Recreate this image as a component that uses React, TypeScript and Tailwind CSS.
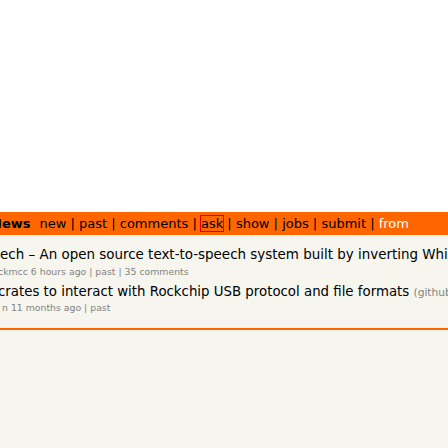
const font = { fontFamily: '"DejaVu Sans", Verdana, sans-serif' };

const navLinks = ["new", "past", "comments", "ask", "show", "jobs", "submit"];

export default function App() {
  return (
    <div className="w-[448px] h-[448px] overflow-hidden bg-white" style={font}>
      <div className="h-[212px]" />
      <div className="bg-[#f6f6ef] h-[236px]">
        {/* top bar */}
        <div className="h-[23px] bg-[#ff6600] flex items-center whitespace-nowrap text-[13px] text-black">
          <b className="ml-[-9px]">News</b>
          <span className="ml-[9px]">
            {navLinks.map((l, i) => (
              <span key={l}>
                {i > 0 && <span> | </span>}
                <span className={l === "ask" ? "outline outline-1 outline-[#e00000]" : ""}>{l}</span>
              </span>
            ))}
            <span> | </span>
            <span className="text-white">from</span>
          </span>
        </div>

        {/* stories */}
        <div className="pt-[12px] whitespace-nowrap">
          <div className="text-[13.45px] text-black leading-[16px]">
            ech – An open source text-to-speech system built by inverting Whisper
          </div>
          <div className="text-[9.33px] text-[#828282] leading-[14px] mt-[2px] ml-[-2px]">
            ckmcc 6 hours ago | past | 35 comments
          </div>
          <div className="text-[13.33px] text-black leading-[16px] mt-[5px] ml-[-2px]">
            crates to interact with Rockchip USB protocol and file formats{" "}
            <span className="text-[10.67px] text-[#828282]">(github.com/rockchip)</span>
          </div>
          <div className="text-[9.33px] text-[#828282] leading-[14px] ml-[2px]">
            n 11 months ago | past
          </div>
        </div>
        <div className="mt-[13px] h-[2px] bg-[#ff6600]" />
      </div>
    </div>
  );
}
